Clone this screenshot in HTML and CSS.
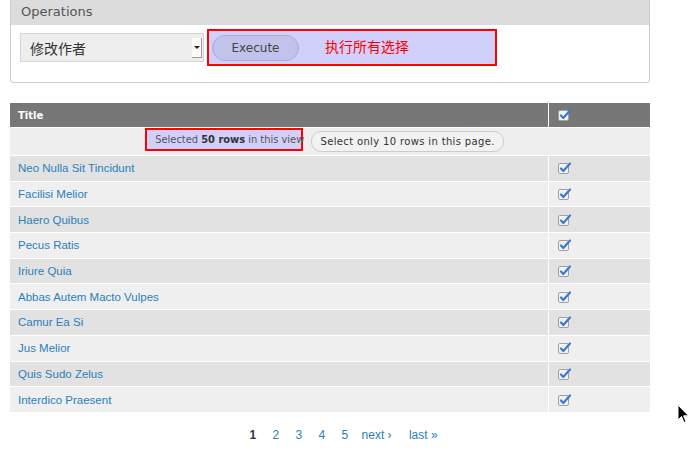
FILE: index.html
```html
<!DOCTYPE html>
<html lang="zh">
<head>
    <meta charset="UTF-8">
    <title>Operations</title>
    <link rel="stylesheet" href="styles.css">
</head>
<body>
    <div class="page">
        <!-- Operations box -->
        <div class="ops">
            <div class="ops-title">Operations</div>
            <div class="ops-body">
                <div class="select">
                    <span>修改作者</span>
                    <span class="select-arrow"></span>
                </div>
                <div class="mark mark-exec">
                    <button class="btn-exec">Execute</button>
                    <span class="note">执行所有选择</span>
                </div>
            </div>
        </div>

        <!-- List -->
        <table class="list">
            <thead>
                <tr>
                    <th class="col-title">Title</th>
                    <th class="col-check">
                        <svg class="check" width="15" height="14" viewBox="0 0 15 14"><rect x="1.5" y="2.5" width="10" height="10" rx="1.5" fill="#f2f2f2" stroke="#a0a0a0"/><path d="M4 7.5 L6.3 10 L13 2.5" fill="none" stroke="#3a7ad4" stroke-width="2.2" stroke-linecap="round" stroke-linejoin="round"/></svg>
                    </th>
                </tr>
            </thead>
            <tbody id="rows">
                <tr class="sel-row">
                    <td colspan="2">
                        <span class="mark mark-sel">Selected <b>50 rows</b> in this view</span>
                        <button class="btn-page">Select only 10 rows in this page.</button>
                    </td>
                </tr>
            </tbody>
        </table>

        <div class="pager">
            <b>1</b>
            <a href="#">2</a>
            <a href="#">3</a>
            <a href="#">4</a>
            <a href="#">5</a>
            <a href="#" class="next">next ›</a>
            <a href="#" class="last">last »</a>
        </div>
    </div>

    <svg class="cursor" width="14" height="22" viewBox="0 0 14 22"><path d="M1 1 L1 16 L4.5 12.5 L7 18.5 L9 17.6 L6.6 11.8 L11.5 11.8 Z" fill="#000" stroke="#fff" stroke-width="1"/></svg>

    <script>
        const titles = [
            'Neo Nulla Sit Tincidunt', 'Facilisi Melior', 'Haero Quibus', 'Pecus Ratis',
            'Iriure Quia', 'Abbas Autem Macto Vulpes', 'Camur Ea Si', 'Jus Melior',
            'Quis Sudo Zelus', 'Interdico Praesent'
        ];
        const check = document.querySelector('.check').outerHTML;
        const rows = document.getElementById('rows');
        titles.forEach(function (t) {
            const tr = document.createElement('tr');
            tr.className = 'item';
            tr.innerHTML = '<td class="col-title"><a href="#">' + t + '</a></td><td class="col-check">' + check + '</td>';
            rows.appendChild(tr);
        });
    </script>
</body>
</html>
```

FILE: styles.css
```css
body {
    margin: 0;
    font-family: "DejaVu Sans", sans-serif;
    background-color: #fff;
    color: #333;
}
.page {
    width: 640px;
    padding: 0 10px;
}
.ops {
    border: 1px solid #ccc;
    border-top: none;
    border-radius: 0 0 4px 4px;
    height: 83px;
    box-sizing: border-box;
}
.ops-title {
    background-color: #dcdcdc;
    height: 25px;
    line-height: 24px;
    padding-left: 10px;
    font-size: 13px;
    color: #555;
}
.ops-body {
    display: flex;
    align-items: center;
    padding: 4px 0 0 9px;
}
.select {
    width: 184px;
    height: 29px;
    box-sizing: border-box;
    background-color: #eee;
    border: 1px solid #d4d4d4;
    display: flex;
    align-items: center;
    justify-content: space-between;
    padding: 0 1px 0 9px;
    font-family: "Noto Sans CJK SC", sans-serif;
    font-size: 14px;
    color: #333;
}
.select-arrow {
    width: 9px;
    height: 19px;
    background-color: #fafafa;
    border: 1px solid #999;
    border-width: 0 1px 1px 0;
    position: relative;
}
.select-arrow::after {
    content: "";
    position: absolute;
    left: 2px;
    top: 8px;
    border: 3px solid transparent;
    border-top: 3px solid #222;
    border-bottom: none;
}
.mark {
    background-color: #d0d0fa;
    border: 2px solid #f00;
}
.mark-exec {
    margin-left: 3px;
    width: 290px;
    height: 37px;
    box-sizing: border-box;
    display: flex;
    align-items: center;
    padding-left: 3px;
}
.btn-exec {
    width: 87px;
    height: 26px;
    border-radius: 13px;
    border: 1px solid #aaaad0;
    background-color: #c2c2ec;
    font-family: "DejaVu Sans", sans-serif;
    font-size: 12px;
    color: #444;
    padding: 0;
}
.note {
    margin-left: 26px;
    margin-top: -4px;
    font-family: "Noto Sans CJK SC", sans-serif;
    font-size: 14px;
    color: #f00;
}
.list {
    width: 640px;
    margin-top: 20px;
    border-collapse: collapse;
    font-family: "Liberation Sans", sans-serif;
    font-size: 11.5px;
}
.list th {
    background-color: #777;
    color: #fff;
    text-align: left;
    height: 24px;
    padding: 0 8px;
    font-family: "DejaVu Sans", sans-serif;
    font-size: 10px;
}
.list th.col-check,
.list td.col-check {
    width: 85px;
    border-left: 1px solid #fff;
    padding-left: 8px;
}
.check {
    display: block;
}
.sel-row td {
    background-color: #eee;
    height: 27px;
    padding: 0;
    vertical-align: top;
    text-align: center;
    font-family: "DejaVu Sans", sans-serif;
    font-size: 10px;
    color: #444;
    border-top: 1px solid #fff;
}
.mark-sel {
    display: inline-block;
    white-space: nowrap;
    box-sizing: border-box;
    width: 158px;
    height: 23px;
    line-height: 19px;
    padding: 0 0 0 8px;
    text-align: left;
    margin-left: -11px;
    font-size: 9.9px;
    color: #555;
}
.mark-sel b {
    color: #333;
}
.btn-page {
    margin: 3px 0 0 5px;
    height: 21px;
    padding: 0 8px;
    border: 1px solid #ccc;
    border-radius: 10px;
    background-color: #f2f2f2;
    font-family: "DejaVu Sans", sans-serif;
    font-size: 10px;
    letter-spacing: 0.35px;
    color: #333;
    vertical-align: top;
}
.item td {
    height: 24.7px;
    padding: 0 8px;
    border-top: 1px solid #fff;
    background-color: #efefef;
}
.item:nth-child(even) td {
    background-color: #e2e2e2;
}
.item a {
    color: #2b80b9;
    text-decoration: none;
}
.pager {
    text-align: center;
    margin-top: 16px;
    padding-left: 40px;
    font-family: "Liberation Sans", sans-serif;
    font-size: 12px;
}
.pager b {
    color: #333;
    margin-right: 13px;
}
.pager a {
    color: #2b80b9;
    text-decoration: none;
    margin-right: 13px;
}
.pager a.next {
    margin-left: -3px;
}
.pager a.last {
    margin-left: 1px;
}
.cursor {
    position: absolute;
    left: 677px;
    top: 404px;
}
```
